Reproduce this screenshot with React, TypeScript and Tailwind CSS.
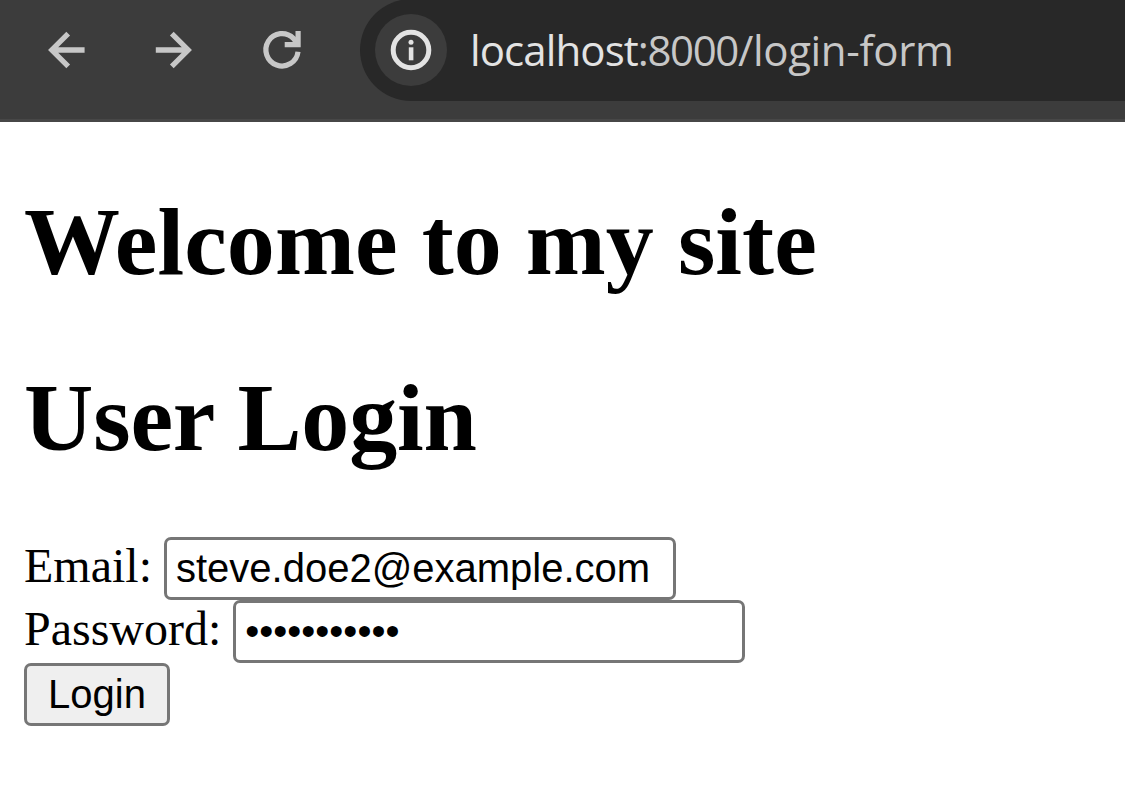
function BackIcon() {
  return (
    <svg width="48" height="48" viewBox="0 0 48 48" fill="none" stroke="#c7c7c7" strokeWidth="5.3" className="shrink-0">
      <path d="M42.6 24H10M26.2 7.6L9.8 24l16.4 16.4" />
    </svg>
  );
}

function ForwardIcon() {
  return (
    <svg width="48" height="48" viewBox="0 0 48 48" fill="none" stroke="#c7c7c7" strokeWidth="5.3" className="shrink-0">
      <path d="M5.8 24H38M21.8 7.6L38.2 24L21.8 40.4" />
    </svg>
  );
}

function ReloadIcon() {
  return (
    <svg width="48" height="48" viewBox="0 0 48 48" fill="none" stroke="#c7c7c7" strokeWidth="5.2" className="shrink-0">
      <path d="M40 25.7A16.1 16.2 0 1 1 35.4 12.3L39 17" />
      <path d="M26.7 18.7H40.1V5" />
    </svg>
  );
}

function InfoIcon() {
  return (
    <svg width="48" height="48" viewBox="0 0 48 48" fill="none" className="shrink-0">
      <circle cx="24" cy="24" r="17.8" stroke="#e3e3e3" strokeWidth="5" />
      <circle cx="24" cy="16.2" r="2.5" fill="#e3e3e3" />
      <path d="M21.8 21.3h4.6v13h-4.6z" fill="#e3e3e3" />
    </svg>
  );
}

export default function App() {
  return (
    <div className="h-[789px] w-[1125px] overflow-hidden bg-white text-black">
      <header className="flex h-[122px] items-start border-b-[3px] border-[#474747] bg-[#3c3c3c]">
        <nav className="flex w-[360px] shrink-0 gap-[60px] pt-[26px] pl-[42px]">
          <button aria-label="Back"><BackIcon /></button>
          <button aria-label="Forward"><ForwardIcon /></button>
          <button aria-label="Reload"><ReloadIcon /></button>
        </nav>
        <div className="-mt-px flex h-[102px] grow items-center rounded-l-full bg-[#282828] pl-[15px]">
          <span className="flex size-[72px] shrink-0 items-center justify-center rounded-full bg-[#3c3c3c]">
            <InfoIcon />
          </span>
          <p className="ml-[23px] font-['Open_Sans',sans-serif] text-[42px] leading-[58px] whitespace-nowrap text-[#c7c7c7]">
            <span className="tracking-[-0.9px] text-[#e3e3e3]">localhost</span>
            <span className="tracking-[-1.4px]">:8000</span>
            <span className="tracking-[-0.35px]">/login-form</span>
          </p>
        </div>
      </header>
      <main className="px-6 pt-16 font-['Liberation_Serif',serif] text-[48px]">
        <h1 className="text-[96px] leading-[112px] font-bold tracking-[0.06px]">Welcome to my site</h1>
        <h1 className="mt-16 text-[96px] leading-[112px] font-bold tracking-[-0.15px]">User Login</h1>
        <form className="mt-[63px] leading-[58px]">
          <div className="flex h-[63px] items-start">
            <label htmlFor="email" className="mr-3">Email:</label>
            <input
              id="email"
              type="text"
              defaultValue="steve.doe2@example.com"
              className="h-[63px] w-[512px] rounded-[7px] border-[3px] border-[#767676] bg-white px-[9px] font-['Liberation_Sans',sans-serif] text-[40px]"
            />
          </div>
          <div className="flex h-[63px] items-start">
            <label htmlFor="password" className="mr-3">Password:</label>
            <input
              id="password"
              type="password"
              defaultValue="abcdefghijk"
              className="h-[63px] w-[512px] rounded-[7px] border-[3px] border-[#767676] bg-white px-[9px] font-['Liberation_Sans',sans-serif] text-[40px]"
            />
          </div>
          <button
            type="button"
            className="block h-[63px] w-[146px] rounded-[7px] border-[3px] border-[#767676] bg-[#efefef] font-['Liberation_Sans',sans-serif] text-[40px] leading-[57px]"
          >
            Login
          </button>
        </form>
      </main>
    </div>
  );
}
